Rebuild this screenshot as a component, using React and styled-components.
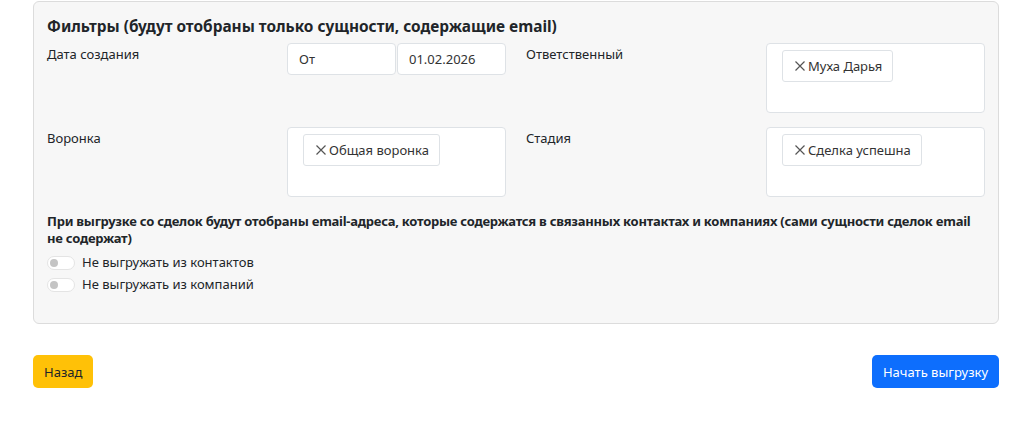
import React, { useState } from "react";
import styled, { createGlobalStyle } from "styled-components";

const GlobalStyle = createGlobalStyle`
  body {
    margin: 0;
    background: #fff;
    font-family: "Noto Sans", "Open Sans", sans-serif;
    color: #212529;
  }
`;

const filters = [
  { id: "date", label: "Дата создания", kind: "date", from: "От", to: "01.02.2026" },
  { id: "owner", label: "Ответственный", kind: "tags", tags: ["Муха Дарья"] },
  { id: "funnel", label: "Воронка", kind: "tags", tags: ["Общая воронка"] },
  { id: "stage", label: "Стадия", kind: "tags", tags: ["Сделка успешна"] },
];

const CloseIcon = () => (
  <svg width="12" height="12" viewBox="0 0 12 12">
    <path d="M1.5 1.5 L10.5 10.5 M10.5 1.5 L1.5 10.5" stroke="#555" strokeWidth="1.2" />
  </svg>
);

const App = () => {
  const [skip, setSkip] = useState({ contacts: false, companies: false });

  return (
    <Page>
      <GlobalStyle />
      <Card>
        <Title>Фильтры (будут отобраны только сущности, содержащие email)</Title>
        <FilterGrid>
          {filters.map((f) => (
            <FilterItem key={f.id}>
              <Label>{f.label}</Label>
              {f.kind === "date" ? (
                <DateRow>
                  <DateInput>{f.from}</DateInput>
                  <DateInput>{f.to}</DateInput>
                </DateRow>
              ) : (
                <TagBox>
                  {f.tags.map((t) => (
                    <Tag key={t}>
                      <CloseIcon />
                      {t}
                    </Tag>
                  ))}
                </TagBox>
              )}
            </FilterItem>
          ))}
        </FilterGrid>
        <Note>
          При выгрузке со сделок будут отобраны email-адреса, которые содержатся в связанных
          контактах и компаниях (сами сущности сделок email не содержат)
        </Note>
        <Switches>
          <SwitchRow onClick={() => setSkip({ ...skip, contacts: !skip.contacts })}>
            <Switch $on={skip.contacts} />
            Не выгружать из контактов
          </SwitchRow>
          <SwitchRow onClick={() => setSkip({ ...skip, companies: !skip.companies })}>
            <Switch $on={skip.companies} />
            Не выгружать из компаний
          </SwitchRow>
        </Switches>
      </Card>
      <Footer>
        <Button $variant="warning">Назад</Button>
        <Button $variant="primary">Начать выгрузку</Button>
      </Footer>
    </Page>
  );
};

const Page = styled.div`
  padding: 1px 25px 0 33px;
`;

const Card = styled.div`
  background: #f7f7f7;
  border: 1px solid #dcdcdc;
  border-radius: 6px;
  padding: 14px 13px 29px 13px;
`;

const Title = styled.h5`
  margin: 0 0 5px;
  font-size: 15.4px;
  font-weight: 700;
  line-height: 22px;
  color: #212529;
`;

const FilterGrid = styled.div`
  display: grid;
  grid-template-columns: 1fr 1fr;
  column-gap: 20px;
  row-gap: 14px;
`;

const FilterItem = styled.div`
  display: grid;
  grid-template-columns: 240px 1fr;
  height: 70px;
`;

const Label = styled.div`
  font-size: 13px;
  line-height: 20px;
  padding-top: 1px;
`;

const DateRow = styled.div`
  display: flex;
  gap: 1px;
  align-items: flex-start;
`;

const DateInput = styled.div`
  flex: 1;
  height: 32px;
  box-sizing: border-box;
  background: #fff;
  border: 1px solid #dee2e6;
  border-radius: 4px;
  padding: 0 11px;
  display: flex;
  align-items: center;
  font-size: 13px;
  color: #333;
`;

const TagBox = styled.div`
  box-sizing: border-box;
  background: #fff;
  border: 1px solid #dee2e6;
  border-radius: 4px;
  padding: 6px 15px;
  display: flex;
  flex-wrap: wrap;
  align-items: flex-start;
  gap: 4px;
`;

const Tag = styled.span`
  display: inline-flex;
  align-items: center;
  gap: 2px;
  height: 32px;
  box-sizing: border-box;
  padding: 0 10px 0 11px;
  border: 1px solid #dee2e6;
  border-radius: 3px;
  background: #fff;
  font-size: 13px;
  color: #333;
`;

const Note = styled.p`
  margin: 16px 0 6px;
  font-size: 13px;
  font-weight: 700;
  line-height: 17px;
  letter-spacing: -0.25px;
`;

const Switches = styled.div`
  display: flex;
  flex-direction: column;
  gap: 3px;
`;

const SwitchRow = styled.label`
  display: flex;
  align-items: center;
  gap: 7px;
  font-size: 13px;
  line-height: 19px;
  cursor: pointer;
`;

const Switch = styled.span`
  position: relative;
  width: 28px;
  height: 14px;
  border-radius: 7px;
  background: ${(p) => (p.$on ? "#0d6efd" : "#fff")};
  border: 1px solid ${(p) => (p.$on ? "#0d6efd" : "#e4e4e4")};
  box-sizing: border-box;
  &::after {
    content: "";
    position: absolute;
    top: 2px;
    left: ${(p) => (p.$on ? "16px" : "2px")};
    width: 8px;
    height: 8px;
    border-radius: 50%;
    background: ${(p) => (p.$on ? "#fff" : "#c4c4c4")};
  }
`;

const Footer = styled.div`
  display: flex;
  justify-content: space-between;
  margin-top: 31px;
`;

const Button = styled.button`
  height: 33px;
  border-radius: 5px;
  border: none;
  padding: 0 11px;
  font-family: inherit;
  font-size: 13px;
  cursor: pointer;
  background: ${(p) => (p.$variant === "primary" ? "#0d6efd" : "#ffc107")};
  color: ${(p) => (p.$variant === "primary" ? "#fff" : "#212529")};
`;

export default App;
